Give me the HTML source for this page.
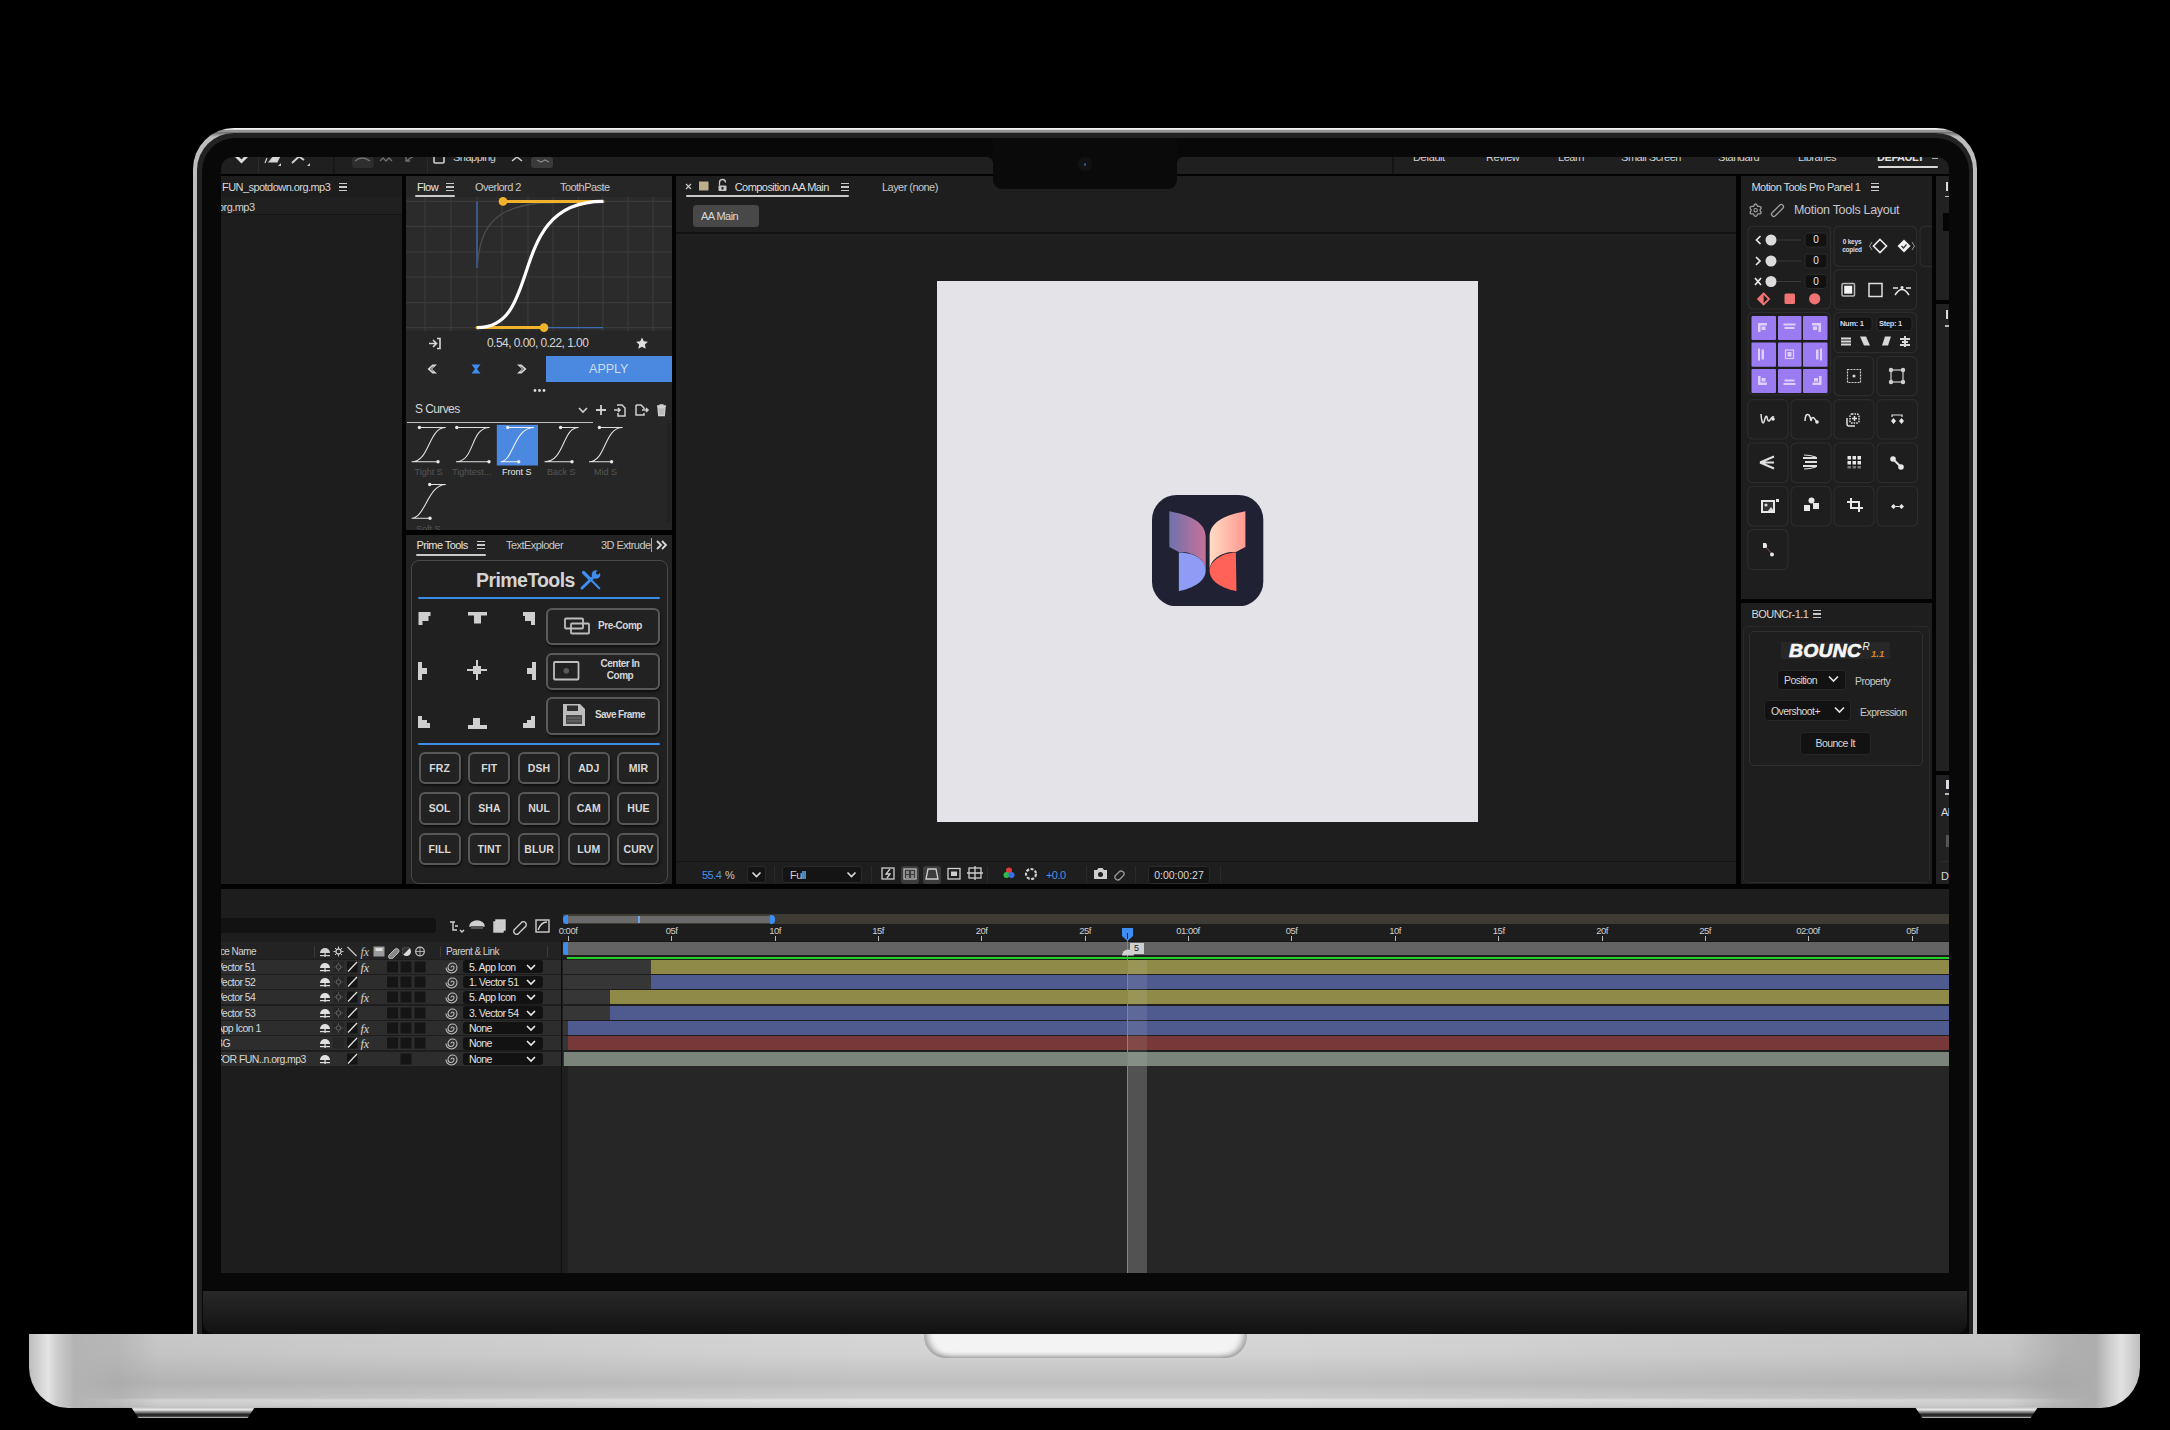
<!DOCTYPE html>
<html><head><meta charset="utf-8">
<style>
*{margin:0;padding:0;box-sizing:border-box}
html,body{width:2170px;height:1430px;overflow:hidden;background:#000}
body{position:relative;font-family:"Liberation Sans",sans-serif;color:#c8c8c8}
.a{position:absolute}
/* laptop */
#lid{left:193px;top:128px;width:1784px;height:1206px;border-radius:41px 41px 0 0;background:linear-gradient(180deg,#f2f2f2 0,#f0f0f0 1.2px,#8c8c8c 2.6px,#9a9a9a 3.6px,#707070 4.6px,#bdbdbd 9px,#c2c2c2 100%)}
#rim{left:197px;top:132.5px;width:1776px;height:1202px;border-radius:37px 37px 0 0;background:#222}
#bez{left:201.5px;top:137.5px;width:1767px;height:1197px;border-radius:33px 33px 0 0;background:#080808}
#screen{left:221px;top:157px;width:1728px;height:1116px;background:#030303;border-radius:12px 12px 0 0;overflow:hidden}
#notch{left:993px;top:138px;width:184px;height:50.5px;background:#0a0a0a;border-radius:0 0 9px 9px}
#cam{left:1078px;top:157px;width:14px;height:14px;border-radius:50%;background:#121215}
#chin{left:203px;top:1291px;width:1764px;height:43px;background:linear-gradient(180deg,#282828,#121212);border-radius:0 0 12px 12px}
#base{left:29px;top:1334px;width:2111px;height:74px;border-radius:0 0 39px 39px/0 0 41px 41px;
 background:linear-gradient(90deg,#bdbdbd 0,#e4e4e4 19px,#cbcbcb 29px,#b4b4b4 45px,rgba(190,190,190,0) 130px,rgba(190,190,190,0) 1980px,#b0b0b0 2066px,#e2e2e2 2092px,#bfbfbf 2111px),
 linear-gradient(180deg,#d6d6d6 0,#d2d2d2 20px,#bfbfbf 49px,#cdcdcd 64px,#e2e2e2 66px,#d6d6d6 72px,#c0c0c0 74px)}
#bnotch{left:924px;top:1334px;width:323px;height:23.5px;background:#f3f3f3;border-radius:0 0 22px 22px;box-shadow:inset 6px -3px 6px -3px rgba(0,0,0,.35),inset -6px -3px 6px -3px rgba(0,0,0,.35)}
.foot{top:1407px;height:11px;background:linear-gradient(180deg,#bcbcbc 0,#e8e8e8 25%,#8a8a8a 45%,#1c1c1c 70%,#3a3a3a 85%,#d8d8d8 100%);clip-path:polygon(0 0,100% 0,94% 100%,6% 100%)}
.t11{font-size:11px;line-height:14px;white-space:nowrap;letter-spacing:-0.55px}
.t12{font-size:12px;line-height:15px;white-space:nowrap}
.lbl{font-size:9px;line-height:11px;white-space:nowrap}
.menu{width:8px;height:8px;background:linear-gradient(#c8c8c8 0,#c8c8c8 1.3px,transparent 1.3px,transparent 3.3px,#c8c8c8 3.3px,#c8c8c8 4.6px,transparent 4.6px,transparent 6.6px,#c8c8c8 6.6px,#c8c8c8 8px)}
.pbtn{width:114px;border:2px solid #5a5a5a;border-radius:6px;background:#222;box-shadow:1px 2px 2px rgba(0,0,0,.5)}
.gbtn{width:42px;height:32.5px;border:2px solid #585858;border-radius:6px;background:#222;box-shadow:1px 2px 2px rgba(0,0,0,.5);font-size:10.5px;font-weight:bold;color:#d8d8d8;text-align:center;line-height:28.5px;letter-spacing:0.1px}
</style></head><body>
<div id="lid" class="a"></div>
<div id="rim" class="a"></div>
<div id="bez" class="a"></div>
<div id="screen" class="a"><div id="ui" class="a" style="left:-221px;top:-157px;width:2170px;height:1430px">
<!-- toolbar -->
<div class="a" style="left:221px;top:157px;width:1728px;height:17px;background:#1f1f1f"></div>
<div class="a" style="left:221px;top:157px;width:1728px;height:20px">
 <svg class="a" style="left:0;top:0" width="1728" height="20" viewBox="221 157 1728 20">
  <g fill="none" stroke="#d0d0d0" stroke-width="1.6">
   <path d="M234 156 L249 156 L241.5 163.5 Z" fill="#dcdcdc" stroke="none"/><path d="M238 156 L245 156 L241.5 159.5 Z" fill="#1f1f1f" stroke="none"/>
   <path d="M265 163 L267 158 M269 162 L273 157 L280 156 L277 162 Z" fill="#d8d8d8" stroke-width="1.2"/><path d="M278 166 l3 -3 v3z" fill="#ccc" stroke="none"/>
   <path d="M292 163 L299 156.5 L304 160" stroke-width="2"/><path d="M307 166 l3 -3 v3z" fill="#ccc" stroke="none"/>
  </g>
  <rect x="258" y="157" width="1" height="16" fill="#2c2c2c"/>
  <rect x="333" y="157" width="1.5" height="17" fill="#151515"/>
  <rect x="352" y="157" width="21.5" height="11" rx="3" fill="#2e2e2e"/>
  <g fill="none" stroke="#707070" stroke-width="1.3">
   <path d="M355 161 Q362 155 370 161"/>
   <path d="M380 161 l3 -3 l3 3 l3 -3 l3 3"/>
   <path d="M406 161 l8 -5 M406 157 l0 4 l4 0"/>
  </g>
  <rect x="427" y="157" width="1" height="16" fill="#2c2c2c"/>
  <rect x="434" y="155" width="10" height="8" rx="1" fill="none" stroke="#d0d0d0" stroke-width="1.6"/>
  <path d="M512 161 l5 -4 l5 4" fill="none" stroke="#d0d0d0" stroke-width="1.5"/>
  <rect x="531" y="157" width="22" height="11" rx="3" fill="#3a3a3a"/>
  <path d="M537 160 l4 2 l4 -2 l4 2" fill="none" stroke="#888" stroke-width="1.2"/>
 </svg>
 <div class="a" style="left:232px;top:-7px;font-size:11px;color:#cfcfcf;line-height:14px;letter-spacing:-0.5px">Snapping</div>
 <div class="a" style="left:1192px;top:-7px;font-size:11px;color:#cfcfcf;line-height:14px;white-space:nowrap;letter-spacing:-0.45px">
  <span class="a" style="left:0">Default</span><span class="a" style="left:73px">Review</span><span class="a" style="left:145px">Learn</span><span class="a" style="left:208px">Small Screen</span><span class="a" style="left:305px">Standard</span><span class="a" style="left:385px">Libraries</span><span class="a" style="left:464px;font-weight:bold;color:#e0e0e0">DEFAULT</span>
 </div>
 <div class="a" style="left:1657px;top:8.5px;width:60px;height:2.2px;background:#d8d8d8;border-radius:1px"></div>
 <div class="a" style="left:1711px;top:1px;width:6px;height:1.2px;background:#aaa"></div>
  <div class="a" style="left:1171px;top:0;width:1.5px;height:17px;background:#141414"></div>
</div>

<!-- project panel -->
<div class="a" style="left:221px;top:176px;width:181px;height:708px;background:#1d1d1d"></div>
<div class="a" style="left:221px;top:197px;width:181px;height:18px;background:#202020;border-bottom:1px solid #161616"></div>
<div class="a t11" style="left:222px;top:180px;color:#d8d8d8">FUN_spotdown.org.mp3</div>
<div class="a menu" style="left:339px;top:183px"></div>
<div class="a t11" style="left:218px;top:200px;color:#d0d0d0">org.mp3</div>

<!-- flow panel -->
<div class="a" style="left:406px;top:176px;width:266px;height:354px;background:#262626"></div>
<div class="a t11" style="left:417px;top:180px;color:#e8e8e8">Flow</div>
<div class="a menu" style="left:446px;top:183px"></div>
<div class="a" style="left:415px;top:194.5px;width:40px;height:2px;background:#c9c9c9;border-radius:1px"></div>
<div class="a t11" style="left:475px;top:180px;color:#c8c8c8">Overlord 2</div>
<div class="a t11" style="left:560px;top:180px;color:#c8c8c8">ToothPaste</div>
<div class="a" style="left:406px;top:197px;width:266px;height:134px;background:#2b2b2b"></div>
<svg class="a" style="left:406px;top:197px" width="266" height="200" viewBox="406 197 266 200">
 <g stroke="#3a3a3a" stroke-width="1.2">
  <path d="M425 197V331 M451 197V331 M502 197V331 M528 197V331 M553 197V331 M578.5 197V331 M603 197V331 M628 197V331 M653 197V331"/>
  <path d="M406 201.4H672 M406 226.3H672 M406 252H672 M406 277H672 M406 302.7H672 M406 327.6H672"/>
  <path d="M477 197V331"/>
 </g>
 <path d="M477 201.5V268" stroke="#3e6db5" stroke-width="1.3"/>
 <path d="M544 327.6H603" stroke="#3e6db5" stroke-width="1.3"/>
 <path d="M477.5 268 C479 222 500 207 540 203 L603 201.5" stroke="#4c4c4c" stroke-width="1.3" fill="none"/>
 <path d="M477 327.6 H544.8 M603 201.4 H503" stroke="#f2b32c" stroke-width="3" stroke-linecap="round"/>
 <path d="M477 327.6 C544.8 327.6 504.6 201.4 603 201.4" stroke="#fff" stroke-width="3.2" fill="none"/>
 <circle cx="544" cy="327.6" r="4.3" fill="#f2b32c"/>
 <circle cx="503" cy="201.4" r="4.3" fill="#f2b32c"/>
 <!-- import icon -->
 <path d="M429 343.5h7 M433 340l3.5 3.5l-3.5 3.5 M437 338.5h3v10h-3" stroke="#d8d8d8" stroke-width="1.6" fill="none"/>
 <path d="M642 337.5l1.8 3.8l4.1 .5l-3 2.8l.8 4.1l-3.7 -2l-3.7 2l.8 -4.1l-3 -2.8l4.1 -.5z" fill="#dedede"/>
 <path d="M437 364.5l-5 4.5l5 4.5h-4.5l-5 -4.5l5 -4.5z" fill="#d8d8d8"/><path d="M433 366.5l-2.5 2.5l2.5 2.5" stroke="#262626" stroke-width="0.9" fill="none"/>
 <path d="M471.5 364.5h9l-3.5 4.5l3.5 4.5h-9l3.5 -4.5z" fill="#3d8ef0"/>
 <path d="M517 364.5l5 4.5l-5 4.5h4.5l5 -4.5l-5 -4.5z" fill="#d8d8d8"/><path d="M521 366.5l2.5 2.5l-2.5 2.5" stroke="#262626" stroke-width="0.9" fill="none"/>
 <circle cx="535" cy="390.5" r="1.4" fill="#ddd"/><circle cx="539.5" cy="390.5" r="1.4" fill="#ddd"/><circle cx="544" cy="390.5" r="1.4" fill="#ddd"/>
</svg>
<div class="a" style="left:487px;top:336px;font-size:12px;line-height:15px;color:#d6d6d6;letter-spacing:-0.55px">0.54, 0.00, 0.22, 1.00</div>
<div class="a" style="left:545.5px;top:355.7px;width:126.5px;height:26.3px;background:#4a89df;color:#cddbf2;font-size:12.5px;line-height:26px;text-align:center">APPLY</div>
<div class="a t12" style="left:415px;top:402px;color:#d6d6d6;letter-spacing:-0.6px">S Curves</div>
<div class="a" style="left:406.6px;top:421.5px;width:186px;height:1.6px;background:#c0c0c0"></div>
<svg class="a" style="left:406px;top:398px" width="266" height="132" viewBox="406 398 266 132">
 <path d="M579 408l4 4l4 -4" stroke="#d0d0d0" stroke-width="1.6" fill="none"/>
 <path d="M601 405v10 M596 410h10" stroke="#d0d0d0" stroke-width="1.8"/>
 <path d="M617 405h5l3 3v8h-7v-3 M614 410h6 M618 408l2 2l-2 2" stroke="#d0d0d0" stroke-width="1.5" fill="none"/>
 <path d="M636 405h5l3 3v1 M636 405v10h8v-2 M642 410h6 M646 408l2 2l-2 2" stroke="#d0d0d0" stroke-width="1.5" fill="none"/>
 <path d="M657 406h9 M660 406v-1h3v1 M658 407.5h7l-.7 8h-5.6z" stroke="#d0d0d0" stroke-width="1.3" fill="#bbb"/>
 <rect x="496.8" y="424.8" width="41.2" height="40.7" fill="#4a89df"/>
 <g stroke="#e0e0e0" stroke-width="1.1" fill="none">
  <path d="M411.6 461.8 C430 461.8 428 427.5 445.8 427.5 M419.4 427.5h26.4 M411.6 461.8h26.4"/>
  <path d="M456 461.8 C475 461.8 470 427.5 489.7 427.5 M456.8 427.5h32.9 M456 461.8h33"/>
  <path d="M500.6 461.8 C513 461.8 514 427.5 534 427.5 M507.7 427.5h26.3 M500.6 461.8h18.1" stroke="#f0f0f0"/>
  <path d="M544.5 461.8 C565 461.8 562 427.5 578.7 427.5 M560.6 427.5h18.1 M544.5 461.8h27.5"/>
  <path d="M589 461.8 C606 461.8 604 427.5 622.6 427.5 M599.4 427.5h23.2 M589 461.8h22.6"/>
  <path d="M411.6 518.3 C425 518.3 428 484.5 445.8 484.5 M429.7 484.5h16.1 M411.6 518.3h18.4"/>
 </g>
 <g fill="#e8e8e8">
  <circle cx="419.4" cy="427.5" r="1.7"/><circle cx="438" cy="461.8" r="1.7"/>
  <circle cx="456.8" cy="427.5" r="1.7"/><circle cx="489" cy="461.8" r="1.7"/>
  <circle cx="507.7" cy="427.5" r="1.7"/><circle cx="518.7" cy="461.8" r="1.7"/>
  <circle cx="560.6" cy="427.5" r="1.7"/><circle cx="572" cy="461.8" r="1.7"/>
  <circle cx="599.4" cy="427.5" r="1.7"/><circle cx="611.6" cy="461.8" r="1.7"/>
  <circle cx="429.7" cy="484.5" r="1.7"/><circle cx="430" cy="518.3" r="1.7"/>
 </g>
 <rect x="666.5" y="423" width="4.5" height="100" fill="#222"/>
</svg>
<div class="a lbl" style="left:414.5px;top:467px;color:#555">Tight S</div>
<div class="a lbl" style="left:452px;top:467px;color:#555">Tightest...</div>
<div class="a lbl" style="left:502px;top:467px;color:#e8e8e8">Front S</div>
<div class="a lbl" style="left:547px;top:467px;color:#555">Back S</div>
<div class="a lbl" style="left:594px;top:467px;color:#555">Mid S</div>
<div class="a lbl" style="left:416px;top:524px;color:#555">Soft S</div>
<div class="a" style="left:406px;top:530px;width:266px;height:5px;background:#030303"></div>

<!-- prime tools panel -->
<div class="a" style="left:406px;top:535px;width:266px;height:349px;background:#232323"></div>
<div class="a t11" style="left:416.5px;top:538px;color:#e6e6e6">Prime Tools</div>
<div class="a menu" style="left:477px;top:541px"></div>
<div class="a" style="left:415.5px;top:553.5px;width:70px;height:2px;background:#c9c9c9;border-radius:1px"></div>
<div class="a t11" style="left:506px;top:538px;color:#c8c8c8">TextExploder</div>
<div class="a t11" style="left:601px;top:538px;color:#c8c8c8;width:50px;overflow:hidden">3D Extruder</div>
<div class="a" style="left:651px;top:538px;width:1px;height:14px;background:#aaa"></div>
<svg class="a" style="left:655px;top:539px" width="14" height="12"><path d="M2 2l4 4l-4 4 M7 2l4 4l-4 4" stroke="#d8d8d8" stroke-width="1.8" fill="none"/></svg>
<div class="a" style="left:410.5px;top:560px;width:257.5px;height:323.5px;border:1.6px solid #474747;border-radius:8px;background:#202020"></div>
<div class="a" style="left:476px;top:568px;font-size:19.5px;line-height:24px;color:#d4d4d4;font-weight:bold;letter-spacing:-0.6px">PrimeTools</div>
<svg class="a" style="left:578px;top:567px" width="26" height="26" viewBox="578 567 26 26">
 <path d="M583.5 572.5 L589.5 578.5" stroke="#3d8ef0" stroke-width="3.2" stroke-linecap="round"/>
 <path d="M589 578 L599.3 588.3" stroke="#3d8ef0" stroke-width="2" stroke-linecap="round"/>
 <path d="M582 588 L593 577.5" stroke="#3d8ef0" stroke-width="3" stroke-linecap="round"/>
 <circle cx="596" cy="574.5" r="4.3" fill="#3d8ef0"/>
 <circle cx="597.6" cy="572.9" r="1.7" fill="#202020"/>
 <path d="M597.6 572.9 L601 569.5" stroke="#202020" stroke-width="3.4"/>
</svg>
<div class="a" style="left:418px;top:596.5px;width:242px;height:2.5px;background:#3b8de6;border-radius:1px"></div>
<div class="a" style="left:418px;top:742.5px;width:242px;height:2.5px;background:#3b8de6;border-radius:1px"></div>
<svg class="a" style="left:410px;top:600px" width="140" height="140" viewBox="410 600 140 140">
 <g fill="#cfcfcf">
  <path d="M418.5 612h12v4h-8v9h-4z M422.5 616h6v5h-6z"/>
  <path d="M468 612h19v3.5h-6v8h-7v-8h-6z"/>
  <path d="M523 612h12v13h-4v-9h-8z M525 616h6v5h-6z"/>
  <path d="M418 662h4v6h5v6h-5v6h-4z"/>
  <path d="M476 660h2v9h9v2h-9v9h-2v-9h-9v-2h9z M473 666h8v8h-8z"/>
  <path d="M532 662h4v18h-4v-6h-5v-6h5z"/>
  <path d="M418 716h4v7h8v5h-12z M422 720h5v3h-5z"/>
  <path d="M473 718h7v7h7v4h-19v-4h5z"/>
  <path d="M531 716h4v12h-12v-5h8z M527 720h4v3h-4z"/>
 </g>
</svg>
<div class="a pbtn" style="left:546px;top:608px;height:37px"></div>
<div class="a pbtn" style="left:546px;top:652.5px;height:37px"></div>
<div class="a pbtn" style="left:546px;top:697px;height:37.5px"></div>
<svg class="a" style="left:550px;top:610px" width="50" height="125" viewBox="550 610 50 125">
 <g fill="none" stroke="#bdbdbd" stroke-width="1.8">
  <rect x="565" y="618.5" width="18" height="10" rx="1"/>
  <rect x="571" y="623.5" width="18" height="10" rx="1"/>
  <rect x="554" y="662" width="24.5" height="17.5" rx="1"/>
 </g>
 <circle cx="566.3" cy="670.8" r="2.8" fill="#5a5a5a"/>
 <path d="M563 704h17l5 5v17h-22z" fill="#bdbdbd"/>
 <rect x="567" y="705.5" width="11" height="5.5" fill="#2e2e2e"/>
 <rect x="566" y="715" width="16" height="9" fill="#4a4a4a"/>
 <path d="M567 718h14 M567 721h14" stroke="#777" stroke-width="1"/>
</svg>
<div class="a" style="left:585px;top:619px;width:70px;font-size:10px;line-height:14px;color:#d6d6d6;font-weight:bold;text-align:center;letter-spacing:-0.5px">Pre-Comp</div>
<div class="a" style="left:585px;top:658px;width:70px;font-size:10px;line-height:12px;color:#d6d6d6;font-weight:bold;text-align:center;letter-spacing:-0.5px">Center In<br>Comp</div>
<div class="a" style="left:585px;top:708px;width:70px;font-size:10px;line-height:14px;color:#d6d6d6;font-weight:bold;text-align:center;letter-spacing:-0.6px">Save Frame</div>
<div class="a" style="left:418.7px;top:751.6px">
 <div class="a gbtn" style="left:0;top:0">FRZ</div><div class="a gbtn" style="left:49.7px;top:0">FIT</div><div class="a gbtn" style="left:99.4px;top:0">DSH</div><div class="a gbtn" style="left:149.1px;top:0">ADJ</div><div class="a gbtn" style="left:198.8px;top:0">MIR</div>
 <div class="a gbtn" style="left:0;top:40.6px">SOL</div><div class="a gbtn" style="left:49.7px;top:40.6px">SHA</div><div class="a gbtn" style="left:99.4px;top:40.6px">NUL</div><div class="a gbtn" style="left:149.1px;top:40.6px">CAM</div><div class="a gbtn" style="left:198.8px;top:40.6px">HUE</div>
 <div class="a gbtn" style="left:0;top:81.2px">FILL</div><div class="a gbtn" style="left:49.7px;top:81.2px">TINT</div><div class="a gbtn" style="left:99.4px;top:81.2px">BLUR</div><div class="a gbtn" style="left:149.1px;top:81.2px">LUM</div><div class="a gbtn" style="left:198.8px;top:81.2px">CURV</div>
</div>

<!-- comp panel -->
<div class="a" style="left:676px;top:176px;width:1060px;height:708px;background:#1e1e1e"></div>
<svg class="a" style="left:676px;top:176px" width="200" height="25" viewBox="676 176 200 25">
 <path d="M686 184l5 5 M691 184l-5 5" stroke="#c8c8c8" stroke-width="1.2"/>
 <rect x="699" y="181.5" width="9.5" height="9" fill="#bfae8a"/>
 <path d="M719.5 185.5v-3a3 3 0 0 1 6 0" stroke="#c8c8c8" stroke-width="1.3" fill="none"/>
 <rect x="718.5" y="185.5" width="8" height="5.5" rx="1" fill="#c8c8c8"/>
 <rect x="721.5" y="187" width="2" height="2.5" fill="#1e1e1e"/>
</svg>
<div class="a t11" style="left:734.7px;top:180px;color:#dedede">Composition AA Main</div>
<div class="a menu" style="left:841px;top:183px"></div>
<div class="a" style="left:686px;top:195.2px;width:163px;height:2px;background:#c8c8c8;border-radius:1px"></div>
<div class="a t11" style="left:882px;top:180px;color:#c8c8c8">Layer (none)</div>
<div class="a" style="left:693px;top:205px;width:66px;height:21.5px;background:#484848;border-radius:3.5px"></div>
<div class="a t11" style="left:701px;top:209px;color:#d8d8d8">AA Main</div>
<div class="a" style="left:676px;top:232px;width:1060px;height:2px;background:#121212"></div>
<!-- canvas -->
<div class="a" style="left:937.2px;top:280.5px;width:541px;height:541.5px;background:#e4e4e8"></div>
<svg class="a" style="left:1152.4px;top:495.2px" width="111.3" height="111.3" viewBox="200 225 995 995">
 <defs>
  <linearGradient id="lw" x1="0" x2="1" y1="0" y2="0"><stop offset="0" stop-color="#6f72ad"/><stop offset="1" stop-color="#c77198"/></linearGradient>
  <linearGradient id="rw" x1="0" x2="1" y1="0" y2="0"><stop offset="0" stop-color="#ffdcc4"/><stop offset="1" stop-color="#ff9891"/></linearGradient>
 </defs>
 <rect x="200" y="225" width="995" height="995" rx="220" fill="#212134"/>
 <path d="M355 370 C520 400 680 460 680 600 L680 900 C680 800 560 725 440 735 L355 690 Z" fill="url(#lw)"/>
 <path d="M440 740 C600 740 680 820 680 900 C680 1000 560 1060 440 1085 Z" fill="#8f9cf5"/>
 <path d="M1035 370 L1035 690 L950 735 C830 725 715 800 715 900 L715 600 C715 460 870 400 1035 370 Z" fill="url(#rw)"/>
 <path d="M950 740 L955 1085 C830 1060 715 1000 715 900 C715 820 830 740 950 740 Z" fill="#ff6358"/>
</svg>
<!-- viewer toolbar -->
<div class="a" style="left:676px;top:861px;width:1060px;height:1px;background:#141414"></div>
<div class="a t11" style="left:702px;top:868px;color:#4b8fe2">55.4</div>
<div class="a t11" style="left:725px;top:868px;color:#c8c8c8">%</div>
<div class="a" style="left:747px;top:866px;width:19px;height:17px;background:#141414;border:1px solid #2a2a2a;border-radius:3px"></div>
<svg class="a" style="left:747px;top:866px" width="19" height="17"><path d="M5.5 6.5l4 4l4 -4" stroke="#ddd" stroke-width="1.6" fill="none"/></svg>
<div class="a" style="left:774px;top:866px;width:1px;height:17px;background:#2a2a2a"></div>
<div class="a" style="left:782px;top:866px;width:80px;height:17px;background:#141414;border:1px solid #2a2a2a;border-radius:3px"></div>
<div class="a t11" style="left:790px;top:868px;color:#d0d0d0">Full</div>
<svg class="a" style="left:842px;top:866px" width="19" height="17"><path d="M5.5 6.5l4 4l4 -4" stroke="#ddd" stroke-width="1.6" fill="none"/></svg>
<div class="a" style="left:871px;top:866px;width:1px;height:17px;background:#2a2a2a"></div>
<div class="a" style="left:901px;top:865.5px;width:18px;height:18px;background:#3c3c3c;border-radius:3px"></div>
<div class="a" style="left:923px;top:865.5px;width:18px;height:18px;background:#3c3c3c;border-radius:3px"></div>
<svg class="a" style="left:876px;top:862px" width="360" height="22" viewBox="876 862 360 22">
 <g fill="none" stroke="#cfcfcf" stroke-width="1.3">
  <rect x="882" y="868" width="12" height="11"/>
  <path d="M890 869l-4 5h4l-3 4"/>
  <rect x="904" y="869" width="12" height="10" stroke="#bbb"/>
  <path d="M926 879l2 -10h8l2 10z"/>
  <rect x="948" y="868.5" width="12" height="10.5"/>
  <rect x="969" y="868" width="12" height="10"/>
  <path d="M975 866v14 M967 873h16"/>
 </g>
 <rect x="951" y="871.5" width="6" height="4.5" fill="#cfcfcf"/>
 <g fill="#888"><rect x="906" y="871" width="3" height="3"/><rect x="911" y="871" width="3" height="3"/><rect x="906" y="875" width="3" height="3"/><rect x="911" y="875" width="3" height="3"/></g>
 <rect x="987" y="866" width="1" height="17" fill="#2a2a2a"/>
 <circle cx="1009" cy="870.5" r="3" fill="#e23b3b"/><circle cx="1006.5" cy="875" r="3" fill="#2fb84a"/><circle cx="1011.5" cy="875" r="3" fill="#3a6ee8"/>
 <circle cx="1031" cy="874" r="5" fill="none" stroke="#cfcfcf" stroke-width="2.2" stroke-dasharray="3 1.5"/>
 <rect x="1086" y="866" width="1" height="17" fill="#2a2a2a"/>
 <path d="M1094 870h3l1.5 -2h4l1.5 2h3v9h-13z" fill="#cfcfcf"/>
 <circle cx="1100.5" cy="874.5" r="2.5" fill="#1e1e1e"/>
 <path d="M1115 876l4 -4a3 3 0 0 1 5 3l-4 4a3 3 0 0 1 -5 -3z" fill="none" stroke="#999" stroke-width="1.3"/>
 <rect x="1135" y="866" width="1" height="17" fill="#2a2a2a"/>
</svg>
<div class="a t11" style="left:1046px;top:868px;color:#4b8fe2">+0.0</div>
<div class="a" style="left:1148px;top:866px;width:62px;height:17.5px;background:#141414;border:1px solid #2a2a2a;border-radius:3px"></div>
<div class="a" style="left:1148px;top:868px;width:62px;font-size:10.5px;line-height:14px;color:#d8d8d8;text-align:center">0:00:00:27</div>
<div class="a" style="left:1220px;top:866px;width:1px;height:17px;background:#2a2a2a"></div>

<!-- motion tools panel -->
<div class="a" style="left:1741px;top:176px;width:191px;height:423px;background:#1e1e1e"></div>
<div class="a t11" style="left:1751.5px;top:180px;color:#dadada">Motion Tools Pro Panel 1</div>
<div class="a menu" style="left:1871px;top:183px"></div>
<svg class="a" style="left:1741px;top:196px" width="191" height="400" viewBox="1741 196 191 400">
 <path d="M1760.05 210.20 L1760.15 210.60 L1760.40 211.05 L1760.72 211.57 L1760.98 212.16 L1761.07 212.75 L1760.93 213.27 L1760.54 213.66 L1759.99 213.88 L1759.35 213.95 L1758.73 213.93 L1758.22 213.94 L1757.82 214.05 L1757.53 214.34 L1757.27 214.78 L1756.97 215.32 L1756.59 215.84 L1756.13 216.21 L1755.60 216.35 L1755.07 216.21 L1754.61 215.84 L1754.23 215.32 L1753.93 214.78 L1753.67 214.34 L1753.38 214.05 L1752.98 213.94 L1752.47 213.93 L1751.85 213.95 L1751.21 213.88 L1750.66 213.66 L1750.27 213.27 L1750.13 212.75 L1750.22 212.16 L1750.48 211.57 L1750.80 211.05 L1751.05 210.60 L1751.15 210.20 L1751.05 209.80 L1750.80 209.35 L1750.48 208.83 L1750.22 208.24 L1750.13 207.65 L1750.27 207.12 L1750.66 206.74 L1751.21 206.52 L1751.85 206.45 L1752.47 206.47 L1752.98 206.46 L1753.38 206.35 L1753.67 206.06 L1753.93 205.62 L1754.23 205.08 L1754.61 204.56 L1755.07 204.19 L1755.60 204.05 L1756.13 204.19 L1756.59 204.56 L1756.97 205.08 L1757.27 205.62 L1757.53 206.06 L1757.82 206.35 L1758.22 206.46 L1758.73 206.47 L1759.35 206.45 L1759.99 206.52 L1760.54 206.74 L1760.93 207.12 L1761.07 207.65 L1760.98 208.24 L1760.72 208.83 L1760.40 209.35 L1760.15 209.80 L1760.05 210.20Z" fill="none" stroke="#a0a0a0" stroke-width="1.3"/><circle cx="1755.6" cy="210.2" r="1.7" fill="none" stroke="#a0a0a0" stroke-width="1.1"/>
 <rect x="1770" y="208.3" width="15" height="4.4" rx="2.2" transform="rotate(-45 1777.5 210.5)" fill="none" stroke="#a0a0a0" stroke-width="1.3"/>
 <g fill="none" stroke="#2c2c2c" stroke-width="1.2">
  <rect x="1748" y="226.3" width="82.5" height="82.7" rx="5"/>
  <rect x="1834" y="226.3" width="82.6" height="40.2" rx="5"/>
  <rect x="1920" y="226.3" width="20" height="40.2" rx="5"/>
  <rect x="1834" y="269.7" width="82.6" height="40" rx="5"/>
  <rect x="1748" y="312.4" width="82.5" height="82.6" rx="5"/>
  <rect x="1834" y="312.4" width="82.6" height="40.2" rx="5"/>
  <rect x="1834" y="356.6" width="39.5" height="39" rx="5"/>
  <rect x="1877" y="356.6" width="40" height="39" rx="5"/>
  <rect x="1747.7" y="399.7" width="40.2" height="39.3" rx="5"/><rect x="1791" y="399.7" width="40" height="39.3" rx="5"/><rect x="1834" y="399.7" width="40" height="39.3" rx="5"/><rect x="1877" y="399.7" width="40.5" height="39.3" rx="5"/>
  <rect x="1747.7" y="443" width="40.2" height="39.6" rx="5"/><rect x="1791" y="443" width="40" height="39.6" rx="5"/><rect x="1834" y="443" width="40" height="39.6" rx="5"/><rect x="1877" y="443" width="40.5" height="39.6" rx="5"/>
  <rect x="1747.7" y="486.5" width="40.2" height="39.5" rx="5"/><rect x="1791" y="486.5" width="40" height="39.5" rx="5"/><rect x="1834" y="486.5" width="40" height="39.5" rx="5"/><rect x="1877" y="486.5" width="40.5" height="39.5" rx="5"/>
  <rect x="1747.7" y="529.6" width="40.2" height="40" rx="5"/>
 </g>
 <!-- box1 -->
 <g stroke="#e8e8e8" stroke-width="1.7" fill="none">
  <path d="M1760.5 236l-4 4l4 4"/><path d="M1756 257l4 4l-4 4"/><path d="M1755 278l6 7 M1761 278l-6 7"/>
 </g>
 <g stroke="#3a3a3a" stroke-width="1.2"><path d="M1777 240h24 M1777 261h24 M1777 281.5h24"/></g>
 <g fill="#dcdcdc"><circle cx="1771" cy="240" r="5.5"/><circle cx="1771" cy="261" r="5.5"/><circle cx="1771" cy="281.5" r="5.5"/></g>
 <g fill="#111" stroke="#2a2a2a" stroke-width="1"><rect x="1805" y="233" width="22" height="14" rx="3"/><rect x="1805" y="254" width="22" height="14" rx="3"/><rect x="1805" y="274.5" width="22" height="14" rx="3"/></g>
 <path d="M1763.6 293.5l5.5 5.5l-5.5 5.5l-5.5 -5.5z" fill="none" stroke="#f07272" stroke-width="1.8"/><path d="M1763.6 293.5l-5.5 5.5l5.5 5.5z" fill="#f07272"/>
 <rect x="1784.5" y="293.6" width="10.5" height="10.5" rx="1.5" fill="#f07272"/>
 <circle cx="1814.7" cy="298.8" r="5.6" fill="#f07272"/>
 <!-- box2 -->
 <path d="M1880 239.5l6.5 6.5l-6.5 6.5l-6.5 -6.5z" fill="none" stroke="#e8e8e8" stroke-width="1.7"/>
 <path d="M1872 242l-2.5 4l2.5 4" stroke="#999" stroke-width="1" fill="none"/>
 <path d="M1904 239.5l6.5 6.5l-6.5 6.5l-6.5 -6.5z" fill="#f0f0f0"/>
 <path d="M1901.5 246l2 2l3 -3.5" stroke="#333" stroke-width="1.2" fill="none"/>
 <path d="M1912 242l2.5 4l-2.5 4" stroke="#999" stroke-width="1" fill="none"/>
 <!-- box3 -->
 <rect x="1842" y="283.5" width="12.5" height="12.5" rx="1.2" fill="none" stroke="#bbb" stroke-width="1.5"/>
 <rect x="1844.2" y="285.7" width="8" height="8" fill="#f4f4f4"/>
 <rect x="1869" y="283.5" width="13" height="13" fill="none" stroke="#e0e0e0" stroke-width="1.5"/>
 <path d="M1895 295 Q1902 284 1909 295 M1893 288h5 M1906 288h5" stroke="#e8e8e8" stroke-width="1.5" fill="none"/>
 <circle cx="1902" cy="287.5" r="1.5" fill="#e8e8e8"/>
 <!-- purple grid -->
 <g fill="#9b7bf2">
  <rect x="1751.5" y="316" width="24.5" height="24" rx="1"/><rect x="1778" y="316" width="23.5" height="24" rx="1"/><rect x="1803" y="316" width="24.5" height="24" rx="1"/>
  <rect x="1751.5" y="342.5" width="24.5" height="24.2" rx="1"/><rect x="1778" y="342.5" width="23.5" height="24.2" rx="1"/><rect x="1803" y="342.5" width="24.5" height="24.2" rx="1"/>
  <rect x="1751.5" y="369" width="24.5" height="24" rx="1"/><rect x="1778" y="369" width="23.5" height="24" rx="1"/><rect x="1803" y="369" width="24.5" height="24" rx="1"/>
 </g>
 <g fill="#dccffb">
  <path d="M1758 323h9v2.5h-6.5v6.5h-2.5z M1761.5 326.5h4v3.5h-4z"/>
  <path d="M1783.5 323.5h12v2h-12z M1784.5 327h10v2h-10z"/>
  <path d="M1812 323h9v9h-2.5v-6.5h-6.5z M1813 326.5h4v3.5h-4z"/>
  <path d="M1758 348.5h2v12h-2z M1761.5 349.5h2.5v10h-2.5z"/>
  <rect x="1785.5" y="350" width="8" height="8.5" fill="none" stroke="#dccffb" stroke-width="1.2"/><rect x="1787.5" y="352" width="4" height="4.5"/>
  <path d="M1816 349.5h2.5v10h-2.5z M1820 348.5h2v12h-2z"/>
  <path d="M1758 376h2.5v6.5h6.5v2.5h-9z M1761.5 378h4v3.5h-4z"/>
  <path d="M1783.5 383h12v2h-12z M1784.5 379.5h10v2h-10z"/>
  <path d="M1819 376h2.5v9h-9v-2.5h6.5z M1814 378h4v3.5h-4z"/>
 </g>
 <!-- box5 -->
 <g fill="#121212" stroke="#2a2a2a" stroke-width="1"><rect x="1838" y="317" width="34" height="13.5" rx="3"/><rect x="1877" y="317" width="35" height="13.5" rx="3"/></g>
 <g fill="#d8d8d8">
  <rect x="1841" y="337.5" width="10" height="2"/><rect x="1841" y="340.5" width="10" height="2"/><rect x="1841" y="343.5" width="10" height="2"/>
  <path d="M1860 336.5h6l4 9h-6z"/><path d="M1882 345.5l3 -9h6l-3 9z"/>
  <path d="M1900 338h10v2h-10z M1902 341h6v2h-6z M1900 344h10v2h-10z M1904 336h2v11h-2z"/>
 </g>
 <!-- box6/7 -->
 <g fill="none" stroke="#d0d0d0" stroke-width="1.2">
  <rect x="1847.5" y="369.5" width="13" height="13" stroke-dasharray="2 1"/>
  <rect x="1891" y="370" width="12" height="12"/>
 </g>
 <circle cx="1854" cy="376" r="1.6" fill="#d0d0d0"/>
 <g fill="#d0d0d0"><circle cx="1891" cy="370" r="2.2"/><circle cx="1903" cy="370" r="2.2"/><circle cx="1891" cy="382" r="2.2"/><circle cx="1903" cy="382" r="2.2"/></g>
 <!-- grid icons -->
 <g fill="none" stroke="#e0e0e0" stroke-width="1.5">
  <path d="M1761 414 q1 12 3 8 q2 -8 3 -5 q1 6 3 3 q2 -4 4 -3"/>
  <path d="M1805 421 q0 -8 4 -6 q2 3 2 6 q1 -5 3 -3 q2 2 3 5"/>
  <rect x="1850" y="414" width="9" height="9" rx="2" stroke-dasharray="1.5 1"/><path d="M1847 418 v6 q0 2 2 2 h6"/><path d="M1854.5 416v5 M1852 418.5h5"/>
  <path d="M1892 417v-2h10v2" stroke-width="1.2"/>
  <path d="M1760 462.5 l14 -6 M1760 462.5 l14 6 M1762 462.5h12" stroke-width="2"/>
  <path d="M1803 458h14 M1803 466h14 M1805 462h12" stroke-width="2.2"/><path d="M1804 455q6 0 12 2 M1804 469q6 0 12 -2" stroke-width="1"/>
 </g>
 <g fill="#e8e8e8">
  <circle cx="1773" cy="419" r="1.8"/><circle cx="1817" cy="422" r="1.8"/>
  <path d="M1891 421l2.5 -3l2.5 3l-2.5 3z M1899 421l2.5 -3l2.5 3l-2.5 3z"/>
  <rect x="1847.5" y="456" width="3.5" height="3.5"/><rect x="1852.5" y="456" width="3.5" height="3.5"/><rect x="1857.5" y="456" width="3.5" height="3.5"/>
  <rect x="1847.5" y="461" width="3.5" height="3.5"/><rect x="1852.5" y="461" width="3.5" height="3.5"/><rect x="1857.5" y="461" width="3.5" height="3.5"/>
  <rect x="1847.5" y="466" width="3.5" height="2.5" fill="#777"/><rect x="1852.5" y="466" width="3.5" height="2.5" fill="#777"/><rect x="1857.5" y="466" width="3.5" height="2.5" fill="#777"/>
  <circle cx="1893" cy="459" r="2.8"/><circle cx="1901" cy="467" r="2.8"/><path d="M1893 459l8 8" stroke="#e8e8e8" stroke-width="2"/>
  <rect x="1761" y="500" width="14" height="13"/><rect x="1776" y="499" width="3" height="3" />
  <circle cx="1811.5" cy="500.5" r="3"/><rect x="1804" y="505" width="6" height="6"/><rect x="1813" y="503" width="6" height="6"/>
  <path d="M1891 506.5l2.5 -2.5l2.5 2.5l-2.5 2.5z M1899 506.5l2.5 -2.5l2.5 2.5l-2.5 2.5z"/><rect x="1896" y="506" width="3" height="1"/>
  <path d="M1763 543h3l1 2v3h-4z"/><circle cx="1772" cy="554.5" r="2"/>
 </g>
 <rect x="1763" y="502" width="10" height="9" fill="#333"/><circle cx="1766" cy="505" r="1.6" fill="#ddd"/><path d="M1768 511l3 -4l3 4z" fill="#ddd"/>
 <path d="M1851 498v10h12 M1847 502h12v10" fill="none" stroke="#e8e8e8" stroke-width="2"/>
 <path d="M1766 547l5 6" stroke="#b06060" stroke-width="0.8"/>
</svg>
<div class="a" style="left:1794px;top:202px;font-size:12.5px;line-height:16px;color:#c6c6ce;letter-spacing:-0.3px;white-space:nowrap">Motion Tools Layout</div>
<div class="a" style="left:1805px;top:233px;width:22px;font-size:10px;line-height:14px;color:#e8e8e8;text-align:center">0</div>
<div class="a" style="left:1805px;top:254px;width:22px;font-size:10px;line-height:14px;color:#e8e8e8;text-align:center">0</div>
<div class="a" style="left:1805px;top:274.5px;width:22px;font-size:10px;line-height:14px;color:#e8e8e8;text-align:center">0</div>
<div class="a" style="left:1840px;top:238px;width:24px;font-size:6.5px;line-height:7.5px;color:#d8d8e8;text-align:center;font-weight:bold;letter-spacing:-0.2px">0 keys<br>copied</div>
<div class="a" style="left:1840px;top:318px;font-size:7.5px;line-height:12px;color:#d8d8e8;font-weight:bold;letter-spacing:-0.3px">Num: 1</div>
<div class="a" style="left:1879px;top:318px;font-size:7.5px;line-height:12px;color:#d8d8e8;font-weight:bold;letter-spacing:-0.3px">Step: 1</div>
<div class="a" style="left:1741px;top:599px;width:191px;height:4px;background:#030303"></div>
<!-- bouncr -->
<div class="a" style="left:1741px;top:603px;width:191px;height:281px;background:#1e1e1e"></div>
<div class="a t11" style="left:1751.5px;top:606.5px;color:#dadada">BOUNCr-1.1</div>
<div class="a menu" style="left:1813px;top:610px"></div>
<div class="a" style="left:1742.6px;top:625.6px;width:187.4px;height:257.4px;border:1px solid #2a2a2a;border-radius:5px"></div>
<div class="a" style="left:1748.5px;top:631px;width:174px;height:135px;border:1.2px solid #303030;border-radius:5px"></div>
<div class="a" style="left:1781px;top:641.6px;width:108.6px;height:17.8px;background:#272727"></div>
<div class="a" style="left:1789px;top:639.5px;font-size:19px;line-height:22px;font-weight:bold;font-style:italic;color:#f6f6f6;letter-spacing:0.2px;white-space:nowrap;-webkit-text-stroke:0.7px #f6f6f6;transform:scaleX(1.02);transform-origin:0 0">BOUNC</div>
<div class="a" style="left:1862.5px;top:641px;font-size:10px;line-height:11px;font-style:italic;color:#f0f0f0">R</div>
<div class="a" style="left:1871px;top:648px;font-size:9.5px;line-height:12px;font-style:italic;font-weight:bold;color:#e08628">1.1</div>
<div class="a" style="left:1776.6px;top:669.5px;width:69px;height:20px;background:#121212;border:1px solid #262626;border-radius:4px"></div>
<div class="a t11" style="left:1784px;top:673px;color:#d8d8d8;font-size:10.5px">Position</div>
<svg class="a" style="left:1826px;top:672px" width="16" height="14"><path d="M3 4.5l4.5 4.5l4.5 -4.5" stroke="#e0e0e0" stroke-width="1.7" fill="none"/></svg>
<div class="a t11" style="left:1855px;top:674px;color:#c8c8c8;font-size:10.5px">Property</div>
<div class="a" style="left:1763.6px;top:700px;width:87.4px;height:20.6px;background:#121212;border:1px solid #262626;border-radius:4px"></div>
<div class="a t11" style="left:1771px;top:704px;color:#d8d8d8;font-size:10.5px">Overshoot+</div>
<svg class="a" style="left:1832px;top:703px" width="16" height="14"><path d="M3 4.5l4.5 4.5l4.5 -4.5" stroke="#e0e0e0" stroke-width="1.7" fill="none"/></svg>
<div class="a t11" style="left:1860px;top:705px;color:#c8c8c8;font-size:10.5px">Expression</div>
<div class="a" style="left:1799.7px;top:731.5px;width:71px;height:23px;background:#121212;border:1px solid #262626;border-radius:4px"></div>
<div class="a t11" style="left:1799.7px;top:736px;width:71px;text-align:center;color:#d8d8d8;font-size:10.5px">Bounce It</div>
<!-- right strip -->
<div class="a" style="left:1936px;top:176px;width:13px;height:595px;background:#212121"></div>
<div class="a" style="left:1936px;top:775px;width:13px;height:109px;background:#212121"></div>
<div class="a" style="left:1936px;top:300px;width:13px;height:3.5px;background:#030303"></div>
<div class="a" style="left:1946px;top:182px;width:2px;height:9px;background:#d8d8e0"></div>
<div class="a" style="left:1945px;top:195.5px;width:4px;height:1.5px;background:#bbb"></div>
<div class="a" style="left:1943px;top:213px;width:6px;height:18px;background:#050505"></div>
<div class="a" style="left:1946px;top:310px;width:2px;height:9px;background:#d8d8e0"></div>
<div class="a" style="left:1945px;top:325px;width:4px;height:1.5px;background:#bbb"></div>
<div class="a" style="left:1946px;top:780px;width:3px;height:9px;background:#d8d8e0"></div>
<div class="a" style="left:1945px;top:793px;width:4px;height:1.5px;background:#bbb"></div>
<div class="a t11" style="left:1941px;top:805px;color:#d8d8d8">Al</div>
<div class="a" style="left:1946px;top:835px;width:3px;height:12px;background:#555"></div>
<div class="a" style="left:1941px;top:861px;width:8px;height:1px;background:#2c2c2c"></div>
<div class="a t11" style="left:1941px;top:869px;color:#d8d8d8">D</div>

<!-- timeline -->
<div class="a" style="left:221px;top:889px;width:1728px;height:384px;background:#1d1d1d"></div>
<div class="a" style="left:563px;top:1066px;width:1386px;height:207px;background:#262626"></div>
<div class="a" style="left:560.8px;top:940px;width:1.6px;height:333px;background:#0e0e0e"></div><div class="a" style="left:562.4px;top:1066px;width:5.6px;height:207px;background:#1f1f1f"></div>
<div class="a" style="left:215px;top:917.8px;width:221px;height:15.7px;background:#121212;border-radius:4px"></div>
<div class="a" style="left:221px;top:942.4px;width:340px;height:17px;background:#232323"></div>
<div class="a t11" style="left:201px;top:945px;color:#d0d0d0;font-size:10px">Source Name</div>
<div class="a" style="left:314px;top:946px;width:1.2px;height:11px;background:#3a3a3a"></div>
<div class="a" style="left:440px;top:946px;width:1.2px;height:11px;background:#3a3a3a"></div>
<div class="a" style="left:547px;top:946px;width:1.2px;height:11px;background:#3a3a3a"></div>
<div class="a t11" style="left:446px;top:945px;color:#d0d0d0;font-size:10px">Parent &amp; Link</div>
<svg class="a" style="left:440px;top:910px" width="120" height="60" viewBox="440 910 120 60"><g fill="none" stroke="#d0d0d0" stroke-width="1.4"><path d="M450 922h5 M453 922v8h4 M455 926h3 M460 930l2 2l2 -2"/><path d="M470 926a7 5 0 0 1 14 0z" fill="#d0d0d0"/><rect x="494" y="922" width="9" height="10" fill="#bbb"/><rect x="496" y="920" width="9" height="10" fill="#ccc"/><path d="M514 930l8 -8a3 3 0 0 1 4 4l-8 8a3 3 0 0 1 -4 -4z"/><rect x="536" y="920" width="13" height="12"/><path d="M538 930q3 -8 9 -8"/></g><path d="M471 926h12v3h-12z" fill="#555"/></svg>
<svg class="a" style="left:316px;top:943px" width="124" height="16" viewBox="316 943 124 16">
<g fill="#d0d0d0"><path d="M320 953a5 5 0 0 1 10 0z"/><rect x="324.5" y="950" width="1.2" height="7"/><rect x="320" y="955" width="10" height="1.2"/></g>
<circle cx="338.5" cy="951.5" r="2.5" fill="none" stroke="#c8c8c8" stroke-width="1.3"/>
<path d="M338.5 946.5v2 M338.5 954.5v2 M333.5 951.5h2 M341.5 951.5h2 M335 948l1.3 1.3 M340.7 953.7l1.3 1.3 M342 948l-1.3 1.3 M336.3 953.7l-1.3 1.3" stroke="#c8c8c8" stroke-width="1"/>
<path d="M347.5 947l9 9" stroke="#c8c8c8" stroke-width="1.3"/>
<text x="360.5" y="956" font-family="Liberation Serif" font-style="italic" font-size="12" fill="#c8c8c8">fx</text>
<rect x="373.5" y="946.5" width="11" height="10" fill="#9a9a9a"/><rect x="375.5" y="948" width="7" height="3" fill="#ddd"/>
<path d="M389 955l6 -6a2.5 2.5 0 0 1 3.5 3.5l-6 6a2.5 2.5 0 0 1 -3.5 -3.5z" fill="#888" stroke="#bbb" stroke-width="1"/>
<circle cx="406.5" cy="951.5" r="4.5" fill="#ddd"/><path d="M406.5 947a4.5 4.5 0 0 0 0 9z" fill="#333" transform="rotate(45 406.5 951.5)"/>
<circle cx="420" cy="951.5" r="4.3" fill="none" stroke="#c8c8c8" stroke-width="1.2"/><path d="M416 951.5h8 M420 947.5v8" stroke="#c8c8c8" stroke-width="0.8"/>
</svg>
<div class="a" style="left:221px;top:959.60px;width:340px;height:14px;background:#2d2d2d"></div>
<div class="a" style="left:563px;top:959.60px;width:1386px;height:14px;background:#363636"></div>
<div class="a" style="left:650.6px;top:959.60px;width:1298.4px;height:14px;background:#8f8a48"></div>
<div class="a t11" style="left:216px;top:959.60px;color:#d8d8d8;font-size:10.5px;line-height:14px">Vector 51</div>
<div class="a" style="left:463px;top:960.40px;width:80px;height:12.5px;background:#121212;border-radius:3px"></div>
<div class="a t11" style="left:469px;top:959.60px;color:#e2e2e2;font-size:10.5px;line-height:14px">5. App Icon</div>
<svg class="a" style="left:316px;top:959.60px" width="230" height="14" viewBox="316 0 230 14"><g fill="#e0e0e0"><path d="M320 8a5 5 0 0 1 10 0z"/><rect x="324.5" y="5" width="1.2" height="7"/><rect x="320" y="10" width="10" height="1.2"/></g><rect x="333" y="1.5" width="11" height="11" fill="#262626"/><circle cx="338.5" cy="7" r="2.2" fill="none" stroke="#5a5a5a" stroke-width="1.1"/><path d="M338.5 2.5v1.5 M338.5 10v1.5 M334 7h1.5 M341.5 7h1.5" stroke="#5a5a5a" stroke-width="1"/><rect x="347" y="1.5" width="10.5" height="11" fill="#141414"/><path d="M348 11.5l9 -9.5" stroke="#e0e0e0" stroke-width="1.3"/><text x="360.5" y="11.5" font-family="Liberation Serif" font-style="italic" font-size="12" fill="#d8d8d8">fx</text><rect x="387" y="1.5" width="11" height="11" fill="#151515"/><rect x="400.5" y="1.5" width="11" height="11" fill="#151515"/><rect x="414.5" y="1.5" width="11" height="11" fill="#151515"/><path d="M451 7.5a1.5 1.5 0 0 1 3 0a3 3 0 0 1 -6 0a4.5 4.5 0 0 1 9 0a5.5 5.5 0 0 1 -11 0" fill="none" stroke="#bdbdbd" stroke-width="1.1"/><path d="M527 5l4 4l4 -4" stroke="#e8e8e8" stroke-width="1.7" fill="none"/></svg>
<div class="a" style="left:221px;top:974.95px;width:340px;height:14px;background:#2d2d2d"></div>
<div class="a" style="left:563px;top:974.95px;width:1386px;height:14px;background:#363636"></div>
<div class="a" style="left:650.6px;top:974.95px;width:1298.4px;height:14px;background:#4f5a8f"></div>
<div class="a t11" style="left:216px;top:974.95px;color:#d8d8d8;font-size:10.5px;line-height:14px">Vector 52</div>
<div class="a" style="left:463px;top:975.75px;width:80px;height:12.5px;background:#121212;border-radius:3px"></div>
<div class="a t11" style="left:469px;top:974.95px;color:#e2e2e2;font-size:10.5px;line-height:14px">1. Vector 51</div>
<svg class="a" style="left:316px;top:974.95px" width="230" height="14" viewBox="316 0 230 14"><g fill="#e0e0e0"><path d="M320 8a5 5 0 0 1 10 0z"/><rect x="324.5" y="5" width="1.2" height="7"/><rect x="320" y="10" width="10" height="1.2"/></g><rect x="333" y="1.5" width="11" height="11" fill="#262626"/><circle cx="338.5" cy="7" r="2.2" fill="none" stroke="#5a5a5a" stroke-width="1.1"/><path d="M338.5 2.5v1.5 M338.5 10v1.5 M334 7h1.5 M341.5 7h1.5" stroke="#5a5a5a" stroke-width="1"/><rect x="347" y="1.5" width="10.5" height="11" fill="#141414"/><path d="M348 11.5l9 -9.5" stroke="#e0e0e0" stroke-width="1.3"/><rect x="387" y="1.5" width="11" height="11" fill="#151515"/><rect x="400.5" y="1.5" width="11" height="11" fill="#151515"/><rect x="414.5" y="1.5" width="11" height="11" fill="#151515"/><path d="M451 7.5a1.5 1.5 0 0 1 3 0a3 3 0 0 1 -6 0a4.5 4.5 0 0 1 9 0a5.5 5.5 0 0 1 -11 0" fill="none" stroke="#bdbdbd" stroke-width="1.1"/><path d="M527 5l4 4l4 -4" stroke="#e8e8e8" stroke-width="1.7" fill="none"/></svg>
<div class="a" style="left:221px;top:990.30px;width:340px;height:14px;background:#2d2d2d"></div>
<div class="a" style="left:563px;top:990.30px;width:1386px;height:14px;background:#363636"></div>
<div class="a" style="left:609.7px;top:990.30px;width:1339.3px;height:14px;background:#8f8a48"></div>
<div class="a t11" style="left:216px;top:990.30px;color:#d8d8d8;font-size:10.5px;line-height:14px">Vector 54</div>
<div class="a" style="left:463px;top:991.10px;width:80px;height:12.5px;background:#121212;border-radius:3px"></div>
<div class="a t11" style="left:469px;top:990.30px;color:#e2e2e2;font-size:10.5px;line-height:14px">5. App Icon</div>
<svg class="a" style="left:316px;top:990.30px" width="230" height="14" viewBox="316 0 230 14"><g fill="#e0e0e0"><path d="M320 8a5 5 0 0 1 10 0z"/><rect x="324.5" y="5" width="1.2" height="7"/><rect x="320" y="10" width="10" height="1.2"/></g><rect x="333" y="1.5" width="11" height="11" fill="#262626"/><circle cx="338.5" cy="7" r="2.2" fill="none" stroke="#5a5a5a" stroke-width="1.1"/><path d="M338.5 2.5v1.5 M338.5 10v1.5 M334 7h1.5 M341.5 7h1.5" stroke="#5a5a5a" stroke-width="1"/><rect x="347" y="1.5" width="10.5" height="11" fill="#141414"/><path d="M348 11.5l9 -9.5" stroke="#e0e0e0" stroke-width="1.3"/><text x="360.5" y="11.5" font-family="Liberation Serif" font-style="italic" font-size="12" fill="#d8d8d8">fx</text><rect x="387" y="1.5" width="11" height="11" fill="#151515"/><rect x="400.5" y="1.5" width="11" height="11" fill="#151515"/><rect x="414.5" y="1.5" width="11" height="11" fill="#151515"/><path d="M451 7.5a1.5 1.5 0 0 1 3 0a3 3 0 0 1 -6 0a4.5 4.5 0 0 1 9 0a5.5 5.5 0 0 1 -11 0" fill="none" stroke="#bdbdbd" stroke-width="1.1"/><path d="M527 5l4 4l4 -4" stroke="#e8e8e8" stroke-width="1.7" fill="none"/></svg>
<div class="a" style="left:221px;top:1005.65px;width:340px;height:14px;background:#2d2d2d"></div>
<div class="a" style="left:563px;top:1005.65px;width:1386px;height:14px;background:#363636"></div>
<div class="a" style="left:609.7px;top:1005.65px;width:1339.3px;height:14px;background:#4f5a8f"></div>
<div class="a t11" style="left:216px;top:1005.65px;color:#d8d8d8;font-size:10.5px;line-height:14px">Vector 53</div>
<div class="a" style="left:463px;top:1006.45px;width:80px;height:12.5px;background:#121212;border-radius:3px"></div>
<div class="a t11" style="left:469px;top:1005.65px;color:#e2e2e2;font-size:10.5px;line-height:14px">3. Vector 54</div>
<svg class="a" style="left:316px;top:1005.65px" width="230" height="14" viewBox="316 0 230 14"><g fill="#e0e0e0"><path d="M320 8a5 5 0 0 1 10 0z"/><rect x="324.5" y="5" width="1.2" height="7"/><rect x="320" y="10" width="10" height="1.2"/></g><rect x="333" y="1.5" width="11" height="11" fill="#262626"/><circle cx="338.5" cy="7" r="2.2" fill="none" stroke="#5a5a5a" stroke-width="1.1"/><path d="M338.5 2.5v1.5 M338.5 10v1.5 M334 7h1.5 M341.5 7h1.5" stroke="#5a5a5a" stroke-width="1"/><rect x="347" y="1.5" width="10.5" height="11" fill="#141414"/><path d="M348 11.5l9 -9.5" stroke="#e0e0e0" stroke-width="1.3"/><rect x="387" y="1.5" width="11" height="11" fill="#151515"/><rect x="400.5" y="1.5" width="11" height="11" fill="#151515"/><rect x="414.5" y="1.5" width="11" height="11" fill="#151515"/><path d="M451 7.5a1.5 1.5 0 0 1 3 0a3 3 0 0 1 -6 0a4.5 4.5 0 0 1 9 0a5.5 5.5 0 0 1 -11 0" fill="none" stroke="#bdbdbd" stroke-width="1.1"/><path d="M527 5l4 4l4 -4" stroke="#e8e8e8" stroke-width="1.7" fill="none"/></svg>
<div class="a" style="left:221px;top:1021.00px;width:340px;height:14px;background:#2d2d2d"></div>
<div class="a" style="left:563px;top:1021.00px;width:1386px;height:14px;background:#363636"></div>
<div class="a" style="left:568.4px;top:1021.00px;width:1380.6px;height:14px;background:#4f5a8f"></div>
<div class="a t11" style="left:216px;top:1021.00px;color:#d8d8d8;font-size:10.5px;line-height:14px">App Icon 1</div>
<div class="a" style="left:463px;top:1021.80px;width:80px;height:12.5px;background:#121212;border-radius:3px"></div>
<div class="a t11" style="left:469px;top:1021.00px;color:#e2e2e2;font-size:10.5px;line-height:14px">None</div>
<svg class="a" style="left:316px;top:1021.00px" width="230" height="14" viewBox="316 0 230 14"><g fill="#e0e0e0"><path d="M320 8a5 5 0 0 1 10 0z"/><rect x="324.5" y="5" width="1.2" height="7"/><rect x="320" y="10" width="10" height="1.2"/></g><rect x="333" y="1.5" width="11" height="11" fill="#262626"/><circle cx="338.5" cy="7" r="2.2" fill="none" stroke="#5a5a5a" stroke-width="1.1"/><path d="M338.5 2.5v1.5 M338.5 10v1.5 M334 7h1.5 M341.5 7h1.5" stroke="#5a5a5a" stroke-width="1"/><rect x="347" y="1.5" width="10.5" height="11" fill="#141414"/><path d="M348 11.5l9 -9.5" stroke="#e0e0e0" stroke-width="1.3"/><text x="360.5" y="11.5" font-family="Liberation Serif" font-style="italic" font-size="12" fill="#d8d8d8">fx</text><rect x="387" y="1.5" width="11" height="11" fill="#151515"/><rect x="400.5" y="1.5" width="11" height="11" fill="#151515"/><rect x="414.5" y="1.5" width="11" height="11" fill="#151515"/><path d="M451 7.5a1.5 1.5 0 0 1 3 0a3 3 0 0 1 -6 0a4.5 4.5 0 0 1 9 0a5.5 5.5 0 0 1 -11 0" fill="none" stroke="#bdbdbd" stroke-width="1.1"/><path d="M527 5l4 4l4 -4" stroke="#e8e8e8" stroke-width="1.7" fill="none"/></svg>
<div class="a" style="left:221px;top:1036.35px;width:340px;height:14px;background:#2d2d2d"></div>
<div class="a" style="left:563px;top:1036.35px;width:1386px;height:14px;background:#363636"></div>
<div class="a" style="left:568.4px;top:1036.35px;width:1380.6px;height:14px;background:#763838"></div>
<div class="a t11" style="left:216px;top:1036.35px;color:#d8d8d8;font-size:10.5px;line-height:14px">BG</div>
<div class="a" style="left:463px;top:1037.15px;width:80px;height:12.5px;background:#121212;border-radius:3px"></div>
<div class="a t11" style="left:469px;top:1036.35px;color:#e2e2e2;font-size:10.5px;line-height:14px">None</div>
<svg class="a" style="left:316px;top:1036.35px" width="230" height="14" viewBox="316 0 230 14"><g fill="#e0e0e0"><path d="M320 8a5 5 0 0 1 10 0z"/><rect x="324.5" y="5" width="1.2" height="7"/><rect x="320" y="10" width="10" height="1.2"/></g><rect x="333" y="1.5" width="11" height="11" fill="#262626"/><rect x="347" y="1.5" width="10.5" height="11" fill="#141414"/><path d="M348 11.5l9 -9.5" stroke="#e0e0e0" stroke-width="1.3"/><text x="360.5" y="11.5" font-family="Liberation Serif" font-style="italic" font-size="12" fill="#d8d8d8">fx</text><rect x="387" y="1.5" width="11" height="11" fill="#151515"/><rect x="400.5" y="1.5" width="11" height="11" fill="#151515"/><rect x="414.5" y="1.5" width="11" height="11" fill="#151515"/><path d="M451 7.5a1.5 1.5 0 0 1 3 0a3 3 0 0 1 -6 0a4.5 4.5 0 0 1 9 0a5.5 5.5 0 0 1 -11 0" fill="none" stroke="#bdbdbd" stroke-width="1.1"/><path d="M527 5l4 4l4 -4" stroke="#e8e8e8" stroke-width="1.7" fill="none"/></svg>
<div class="a" style="left:221px;top:1051.70px;width:340px;height:14px;background:#2d2d2d"></div>
<div class="a" style="left:563px;top:1051.70px;width:1386px;height:14px;background:#363636"></div>
<div class="a" style="left:563.5px;top:1051.70px;width:1385.5px;height:14px;background:#7a847a"></div>
<div class="a t11" style="left:216px;top:1051.70px;color:#d8d8d8;font-size:10.5px;line-height:14px">FOR FUN..n.org.mp3</div>
<div class="a" style="left:463px;top:1052.50px;width:80px;height:12.5px;background:#121212;border-radius:3px"></div>
<div class="a t11" style="left:469px;top:1051.70px;color:#e2e2e2;font-size:10.5px;line-height:14px">None</div>
<svg class="a" style="left:316px;top:1051.70px" width="230" height="14" viewBox="316 0 230 14"><g fill="#e0e0e0"><path d="M320 8a5 5 0 0 1 10 0z"/><rect x="324.5" y="5" width="1.2" height="7"/><rect x="320" y="10" width="10" height="1.2"/></g><rect x="347" y="1.5" width="10.5" height="11" fill="#141414"/><path d="M348 11.5l9 -9.5" stroke="#e0e0e0" stroke-width="1.3"/><rect x="400.5" y="1.5" width="11" height="11" fill="#151515"/><path d="M451 7.5a1.5 1.5 0 0 1 3 0a3 3 0 0 1 -6 0a4.5 4.5 0 0 1 9 0a5.5 5.5 0 0 1 -11 0" fill="none" stroke="#bdbdbd" stroke-width="1.1"/><path d="M527 5l4 4l4 -4" stroke="#e8e8e8" stroke-width="1.7" fill="none"/></svg>
<div class="a" style="left:563px;top:914px;width:1386px;height:10px;background:#3e3b34"></div>
<div class="a" style="left:564.5px;top:915.5px;width:208px;height:7.5px;background:#6a6a6a"></div>
<div class="a" style="left:562.5px;top:914.5px;width:5px;height:9px;background:#3d8ef0;border-radius:4px 0 0 4px"></div>
<div class="a" style="left:770px;top:914.5px;width:5px;height:9px;background:#3d8ef0;border-radius:0 4px 4px 0"></div>
<div class="a" style="left:638px;top:915.5px;width:1.5px;height:7.5px;background:#6ea6e8"></div>
<div class="a" style="left:538px;top:924.5px;width:60px;text-align:center;font-size:9.5px;line-height:12px;color:#cfcfcf;letter-spacing:-0.5px">0:00f</div>
<div class="a" style="left:567.5px;top:935.5px;width:1px;height:5px;background:#bdbdbd"></div>
<div class="a" style="left:641.6px;top:924.5px;width:60px;text-align:center;font-size:9.5px;line-height:12px;color:#cfcfcf;letter-spacing:-0.5px">05f</div>
<div class="a" style="left:671.1px;top:935.5px;width:1px;height:5px;background:#bdbdbd"></div>
<div class="a" style="left:745px;top:924.5px;width:60px;text-align:center;font-size:9.5px;line-height:12px;color:#cfcfcf;letter-spacing:-0.5px">10f</div>
<div class="a" style="left:774.5px;top:935.5px;width:1px;height:5px;background:#bdbdbd"></div>
<div class="a" style="left:848px;top:924.5px;width:60px;text-align:center;font-size:9.5px;line-height:12px;color:#cfcfcf;letter-spacing:-0.5px">15f</div>
<div class="a" style="left:877.5px;top:935.5px;width:1px;height:5px;background:#bdbdbd"></div>
<div class="a" style="left:951.6px;top:924.5px;width:60px;text-align:center;font-size:9.5px;line-height:12px;color:#cfcfcf;letter-spacing:-0.5px">20f</div>
<div class="a" style="left:981.1px;top:935.5px;width:1px;height:5px;background:#bdbdbd"></div>
<div class="a" style="left:1055px;top:924.5px;width:60px;text-align:center;font-size:9.5px;line-height:12px;color:#cfcfcf;letter-spacing:-0.5px">25f</div>
<div class="a" style="left:1084.5px;top:935.5px;width:1px;height:5px;background:#bdbdbd"></div>
<div class="a" style="left:1158px;top:924.5px;width:60px;text-align:center;font-size:9.5px;line-height:12px;color:#cfcfcf;letter-spacing:-0.5px">01:00f</div>
<div class="a" style="left:1187.5px;top:935.5px;width:1px;height:5px;background:#bdbdbd"></div>
<div class="a" style="left:1261.5px;top:924.5px;width:60px;text-align:center;font-size:9.5px;line-height:12px;color:#cfcfcf;letter-spacing:-0.5px">05f</div>
<div class="a" style="left:1291.0px;top:935.5px;width:1px;height:5px;background:#bdbdbd"></div>
<div class="a" style="left:1365px;top:924.5px;width:60px;text-align:center;font-size:9.5px;line-height:12px;color:#cfcfcf;letter-spacing:-0.5px">10f</div>
<div class="a" style="left:1394.5px;top:935.5px;width:1px;height:5px;background:#bdbdbd"></div>
<div class="a" style="left:1468.7px;top:924.5px;width:60px;text-align:center;font-size:9.5px;line-height:12px;color:#cfcfcf;letter-spacing:-0.5px">15f</div>
<div class="a" style="left:1498.2px;top:935.5px;width:1px;height:5px;background:#bdbdbd"></div>
<div class="a" style="left:1572px;top:924.5px;width:60px;text-align:center;font-size:9.5px;line-height:12px;color:#cfcfcf;letter-spacing:-0.5px">20f</div>
<div class="a" style="left:1601.5px;top:935.5px;width:1px;height:5px;background:#bdbdbd"></div>
<div class="a" style="left:1675px;top:924.5px;width:60px;text-align:center;font-size:9.5px;line-height:12px;color:#cfcfcf;letter-spacing:-0.5px">25f</div>
<div class="a" style="left:1704.5px;top:935.5px;width:1px;height:5px;background:#bdbdbd"></div>
<div class="a" style="left:1778px;top:924.5px;width:60px;text-align:center;font-size:9.5px;line-height:12px;color:#cfcfcf;letter-spacing:-0.5px">02:00f</div>
<div class="a" style="left:1807.5px;top:935.5px;width:1px;height:5px;background:#bdbdbd"></div>
<div class="a" style="left:1882px;top:924.5px;width:60px;text-align:center;font-size:9.5px;line-height:12px;color:#cfcfcf;letter-spacing:-0.5px">05f</div>
<div class="a" style="left:1911.5px;top:935.5px;width:1px;height:5px;background:#bdbdbd"></div>
<div class="a" style="left:563px;top:940.5px;width:1386px;height:2px;background:#161616"></div>
<div class="a" style="left:563px;top:942.4px;width:1386px;height:12.8px;background:#646464"></div>
<div class="a" style="left:563px;top:942.4px;width:5px;height:12.8px;background:#3d8ef0;border-radius:4px 0 0 4px"></div>
<div class="a" style="left:563px;top:955.2px;width:1386px;height:1.5px;background:#1e1e1e"></div>
<div class="a" style="left:567px;top:956.5px;width:1382px;height:2.3px;background:#25d02a"></div>
<div class="a" style="left:1127.5px;top:959.6px;width:19.5px;height:106.5px;background:rgba(255,255,255,0.09)"></div>
<div class="a" style="left:1127.5px;top:1066px;width:19.5px;height:207px;background:#525252"></div>
<div class="a" style="left:1126.5px;top:934px;width:1.6px;height:339px;background:#4a8fe0"></div>
<svg class="a" style="left:1121px;top:927px" width="14" height="15"><path d="M1 1h11v8l-5.5 5l-5.5 -5z" fill="#3d8ef0"/><path d="M6.5 6v6" stroke="#123" stroke-width="1"/></svg>
<div class="a" style="left:1129.5px;top:943px;width:14px;height:10.5px;background:#cfcfcf;font-size:9px;line-height:10.5px;color:#222;text-align:center">5</div>
<svg class="a" style="left:1121px;top:946px" width="14" height="10"><path d="M1 9.5a6 6 0 0 1 12 0z" fill="#d0d0d0"/></svg>
<!--UI-->
</div></div>
<div id="notch" class="a"></div>
<div id="cam" class="a"></div>
<div class="a" style="left:1084px;top:162.5px;width:2px;height:3px;background:#2c5a9a;border-radius:1px"></div>
<div class="a" style="left:987px;top:157px;width:6px;height:6px;background:radial-gradient(circle at 0 100%,rgba(0,0,0,0) 5.5px,#0a0a0a 6px)"></div>
<div class="a" style="left:1177px;top:157px;width:6px;height:6px;background:radial-gradient(circle at 100% 100%,rgba(0,0,0,0) 5.5px,#0a0a0a 6px)"></div>
<div id="chin" class="a"></div>
<div id="base" class="a"></div>
<div class="a" style="left:29px;top:1334px;width:2111px;height:74px;border-radius:0 0 39px 39px/0 0 41px 41px;background:linear-gradient(90deg,rgba(0,0,0,0) 40px,rgba(0,0,0,.07) 90px,rgba(0,0,0,0) 850px,rgba(0,0,0,0) 1250px,rgba(0,0,0,.07) 2030px,rgba(0,0,0,0) 2080px)"></div>
<div id="bnotch" class="a"></div>
<div class="a foot" style="left:131px;width:124px"></div>
<div class="a foot" style="left:1915px;width:123px"></div>
</body></html>
